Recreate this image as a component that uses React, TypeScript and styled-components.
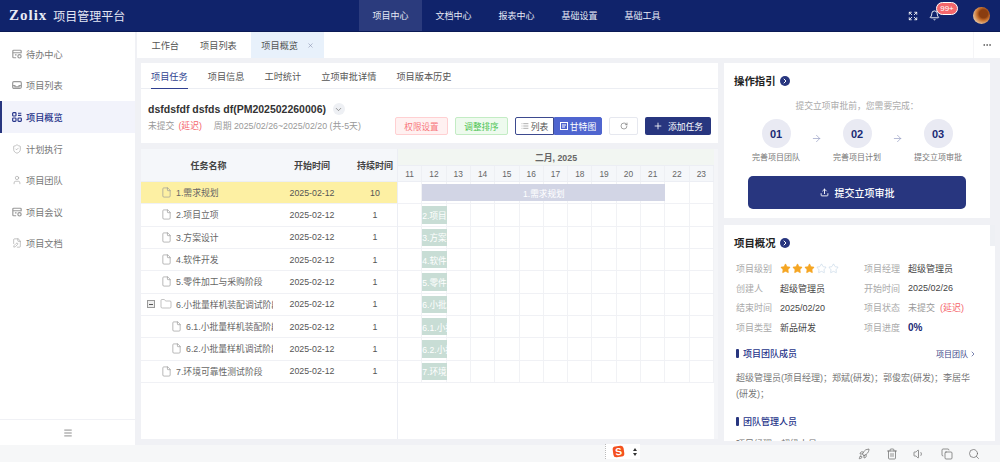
import React from 'react';
import styled, { createGlobalStyle } from 'styled-components';
import {
  ArrowRight,
  Bell,
  ChevronDown,
  ChevronRight,
  Copy,
  Expand,
  File,
  Folder,
  List,
  Menu,
  MoreHorizontal,
  Plus,
  RotateCw,
  Rocket,
  Search,
  ShieldCheck,
  Star,
  Trash2,
  Upload,
  User,
  Volume1,
  X,
  FilePen,
} from 'lucide-react';

const NAVY = '#10236b';
const BTN_NAVY = '#28367f';

const GlobalStyle = createGlobalStyle`
  html, body { margin: 0; padding: 0; }
  body {
    font-family: "Liberation Sans", "Noto Sans CJK SC", sans-serif;
    font-size: 9px;
    color: #555;
  }
  * { box-sizing: border-box; }
`;

const Page = styled.div`
  width: 1000px;
  height: 462px;
  display: flex;
  flex-direction: column;
  overflow: hidden;
  background: #f0f1f5;
`;

/* top bar */
const Header = styled.header`
  height: 32px;
  flex: none;
  display: flex;
  align-items: stretch;
  background: ${NAVY};
  border-bottom: 1px solid #0b1a55;
  color: #fff;
`;
const Brand = styled.div`
  width: 359px;
  flex: none;
  display: flex;
  align-items: center;
  padding-left: 9px;
  gap: 6px;
`;
const LogoWord = styled.span`
  font-family: "Liberation Serif", serif;
  font-weight: 700;
  font-size: 15px;
  letter-spacing: 1px;
  color: #e8ebf6;
`;
const BrandTitle = styled.span`
  font-size: 12px;
  color: #e4e7f4;
`;
const NavItem = styled.div<{ $active?: boolean }>`
  width: 63px;
  display: flex;
  align-items: center;
  justify-content: center;
  font-size: 9px;
  color: #e6e9f5;
  background: ${(p) => (p.$active ? '#2b3b7d' : 'transparent')};
`;
const HeaderTools = styled.div`
  margin-left: auto;
  display: flex;
  align-items: center;
  padding-right: 10px;
`;
const BellWrap = styled.div`
  position: relative;
  display: flex;
  margin-left: 11px;
  margin-right: 33px;
`;
const Badge = styled.span`
  position: absolute;
  left: 7px;
  top: -8px;
  width: 22px;
  height: 13px;
  border-radius: 7px;
  border: 1px solid #fff;
  background: #f4676c;
  color: #fff;
  font-size: 8px;
  line-height: 11px;
  text-align: center;
`;
const Avatar = styled.div`
  width: 17px;
  height: 17px;
  border-radius: 50%;
  background: radial-gradient(circle at 62% 40%, #8a3d10 0 28%, #c8702c 45%, #ecd3b4 80%);
`;

/* shell */
const Body = styled.div`
  flex: 1;
  min-height: 0;
  display: flex;
`;
const Sidebar = styled.aside`
  width: 135px;
  flex: none;
  display: flex;
  flex-direction: column;
  background: #fff;
  padding-top: 6px;
`;
const SideItem = styled.div<{ $active?: boolean }>`
  height: 31.6px;
  flex: none;
  display: flex;
  align-items: center;
  gap: 4px;
  font-size: 9.2px;
  color: ${(p) => (p.$active ? '#26348a' : '#777')};
  font-weight: ${(p) => (p.$active ? 500 : 400)};
  background: ${(p) => (p.$active ? '#f2f3fb' : 'transparent')};
  border-left: ${(p) => (p.$active ? `2px solid ${BTN_NAVY}` : 'none')};
  padding-left: ${(p) => (p.$active ? '10px' : '12px')};
  svg { color: ${(p) => (p.$active ? '#26348a' : '#999')}; }
`;
const SideFooter = styled.div`
  margin-top: auto;
  height: 26px;
  display: flex;
  align-items: center;
  justify-content: center;
  border-top: 1px solid #f0f1f5;
  color: #777;
`;
const Main = styled.main`
  flex: 1;
  min-width: 0;
  display: flex;
  flex-direction: column;
  padding-left: 2px;
`;
const TabBar = styled.div`
  height: 26px;
  flex: none;
  display: flex;
  background: #fff;
`;
const Tab = styled.div<{ $active?: boolean }>`
  display: flex;
  align-items: center;
  gap: 9px;
  padding: 0 ${(p) => (p.$active ? '10px' : '10.5px')};
  margin-left: ${(p) => (p.$active ? '4px' : '0')};
  font-size: 9.2px;
  color: #555;
  background: ${(p) => (p.$active ? '#e8f1fb' : 'transparent')};
  &:first-child { margin-left: 4px; }
  svg { color: #8a93b0; }
`;
const TabMore = styled.div`
  margin-left: auto;
  width: 27px;
  display: flex;
  align-items: center;
  justify-content: center;
  border-left: 1px solid #f5f5f7;
  color: #555;
`;
const Content = styled.div`
  flex: 1;
  min-height: 0;
  display: flex;
  gap: 6px;
  padding: 5px 5px 4px 4px;
`;
const LeftCol = styled.div`
  width: 577px;
  flex: none;
  display: flex;
  flex-direction: column;
`;
const RightCol = styled.div`
  flex: 1;
  min-width: 0;
  display: flex;
  flex-direction: column;
  gap: 7px;
`;

/* project header */
const SubTabs = styled.div`
  height: 26px;
  flex: none;
  display: flex;
  gap: 20px;
  padding-left: 10px;
  background: #fff;
  border-bottom: 1px solid #eceef3;
`;
const SubTab = styled.div<{ $active?: boolean }>`
  display: flex;
  align-items: center;
  font-size: 9.2px;
  color: ${(p) => (p.$active ? '#2f3f90' : '#555')};
  border-bottom: 1px solid ${(p) => (p.$active ? '#2f3f90' : 'transparent')};
  margin-bottom: -1px;
`;
const InfoCard = styled.div`
  height: 54px;
  flex: none;
  display: flex;
  align-items: flex-end;
  justify-content: space-between;
  padding: 0 7px 8px 7px;
  background: #fff;
`;
const InfoText = styled.div`
  display: flex;
  flex-direction: column;
  gap: 4px;
  padding-bottom: 3px;
`;
const TitleRow = styled.div`
  display: flex;
  align-items: center;
  gap: 7px;
  font-size: 10.5px;
  font-weight: 700;
  color: #333;
`;
const RoundChevron = styled.span`
  width: 12px;
  height: 12px;
  border-radius: 50%;
  background: #eef0f4;
  display: flex;
  align-items: center;
  justify-content: center;
  color: #777;
`;
const MetaRow = styled.div`
  display: flex;
  gap: 4px;
  color: #999;
  font-size: 8.8px;
`;
const Late = styled.span`
  color: #f5656b;
`;
const Period = styled.span`
  margin-left: 8px;
`;
const Actions = styled.div`
  display: flex;
  align-items: center;
  gap: 7px;
`;
const SoftButton = styled.div<{ $tone: 'red' | 'green' }>`
  width: 53px;
  height: 18px;
  display: flex;
  align-items: center;
  justify-content: center;
  border-radius: 2px;
  font-size: 8.6px;
  border: 1px solid ${(p) => (p.$tone === 'red' ? '#ffd0d2' : '#c3ecc4')};
  background: ${(p) => (p.$tone === 'red' ? '#fff1f1' : '#eefaee')};
  color: ${(p) => (p.$tone === 'red' ? '#f7777b' : '#4cc452')};
`;
const Toggle = styled.div`
  display: flex;
  height: 18px;
`;
const ToggleItem = styled.div<{ $on?: boolean }>`
  display: flex;
  align-items: center;
  justify-content: center;
  gap: 2px;
  width: ${(p) => (p.$on ? '48px' : '39px')};
  font-size: 8.8px;
  border-radius: ${(p) => (p.$on ? '0 2px 2px 0' : '2px 0 0 2px')};
  background: ${(p) => (p.$on ? '#4f65cf' : '#fff')};
  color: ${(p) => (p.$on ? '#fff' : '#555')};
  border: 1px solid ${(p) => (p.$on ? '#4f65cf' : '#3d4a8f')};
`;
const IconButton = styled.div`
  width: 29px;
  height: 18px;
  display: flex;
  align-items: center;
  justify-content: center;
  border: 1px solid #e6e8ef;
  border-radius: 2px;
  color: #777;
`;
const PrimaryButton = styled.div`
  width: 66px;
  height: 18px;
  display: flex;
  align-items: center;
  justify-content: center;
  gap: 5px;
  border-radius: 2px;
  background: ${BTN_NAVY};
  color: #fff;
  font-size: 8.8px;
`;

/* gantt */
const GanttCard = styled.section`
  flex: 1;
  min-height: 0;
  margin: 6px 0 2px;
  display: flex;
  padding-right: 4px;
  background: #f4f5f8;
`;
const TaskPane = styled.div`
  width: 257px;
  flex: none;
  background: #fff;
  border-right: 1px solid #eceef4;
`;
const TaskHead = styled.div`
  height: 33px;
  display: grid;
  grid-template-columns: 135px 72px 49px;
  align-items: center;
  background: #f5f7fa;
  font-size: 9px;
  font-weight: 700;
  color: #444;
  text-align: center;
  border-bottom: 1px solid #eceef4;
`;
const TaskRow = styled.div<{ $active?: boolean }>`
  height: 22.33px;
  display: grid;
  grid-template-columns: 135px 72px 49px;
  align-items: center;
  background: ${(p) => (p.$active ? '#fdf0a3' : '#fff')};
  border-bottom: 1px solid #f0f1f5;
  color: #555;
  font-size: 8.8px;
  text-align: center;
`;
const NameCell = styled.div<{ $level: number }>`
  display: flex;
  align-items: center;
  gap: 4px;
  overflow: hidden;
  white-space: nowrap;
  padding-left: ${(p) => p.$level}px;
  margin-right: 3px;
  color: #666;
  svg { flex: none; color: #999; }
`;
const Collapse = styled.span`
  width: 8px;
  height: 8px;
  flex: none;
  margin-right: 1px;
  border: 1px solid #999;
  background: #eee;
  display: flex;
  align-items: center;
  justify-content: center;
  &::before {
    content: '';
    width: 4px;
    height: 1px;
    background: #555;
  }
`;
const DurationCell = styled.div`
  padding-left: 5px;
`;
const TimelinePane = styled.div`
  flex: 1;
  min-width: 0;
  background: #fff;
`;
const MonthHead = styled.div`
  height: 17px;
  display: flex;
  align-items: center;
  justify-content: center;
  background: #f2f6f2;
  color: #666;
  font-size: 8.8px;
  font-weight: 700;
  border-bottom: 1px solid #eceef4;
`;
const DaysHead = styled.div`
  height: 16px;
  display: grid;
  grid-template-columns: repeat(13, 1fr);
  background: #f5f7fa;
  border-bottom: 1px solid #eceef4;
`;
const Day = styled.div`
  display: flex;
  align-items: center;
  justify-content: center;
  color: #666;
  font-size: 8.4px;
  border-right: 1px solid #eef0f4;
`;
const TimelineRow = styled.div`
  height: 22.33px;
  display: grid;
  grid-template-columns: repeat(13, 1fr);
  grid-template-rows: 100%;
  border-bottom: 1px solid #f0f1f5;
`;
const GridCell = styled.div<{ $col: number }>`
  grid-row: 1;
  grid-column: ${(p) => p.$col};
  border-right: 1px solid #f1f2f5;
`;
const Bar = styled.div<{ $long?: boolean }>`
  grid-row: 1;
  grid-column: ${(p) => (p.$long ? '2 / span 10' : '2 / span 1')};
  min-width: 0;
  margin: 2px 0;
  display: flex;
  align-items: center;
  justify-content: ${(p) => (p.$long ? 'center' : 'flex-start')};
  overflow: hidden;
  white-space: nowrap;
  background: ${(p) => (p.$long ? '#d2d5e5' : '#c8ddd5')};
  color: #fff;
  font-size: 8.6px;
`;

/* right side */
const GuideCard = styled.section`
  height: 155px;
  flex: none;
  width: 266px;
  background: #fff;
  padding: 10px 10px 0;
  display: flex;
  flex-direction: column;
`;
const SectionTitle = styled.h3`
  margin: 0;
  display: flex;
  align-items: center;
  gap: 4px;
  font-size: 10.4px;
  font-weight: 700;
  color: #222;
`;
const TitleDot = styled.span`
  width: 10px;
  height: 10px;
  border-radius: 50%;
  background: ${BTN_NAVY};
  color: #fff;
  display: flex;
  align-items: center;
  justify-content: center;
`;
const GuideHint = styled.p`
  margin: 11px 0 0;
  text-align: center;
  color: #aaa;
  font-size: 8.8px;
`;
const Steps = styled.div`
  margin-top: 7px;
  display: flex;
  justify-content: center;
`;
const Step = styled.div`
  width: 60px;
  display: flex;
  flex-direction: column;
  align-items: center;
  gap: 3px;
`;
const StepNum = styled.div`
  width: 29px;
  height: 29px;
  border-radius: 50%;
  background: #e9eaf3;
  display: flex;
  align-items: center;
  justify-content: center;
  font-size: 11px;
  font-weight: 700;
  color: #1b2a75;
`;
const StepLabel = styled.span`
  font-size: 8px;
  color: #777;
  white-space: nowrap;
`;
const StepArrow = styled.div`
  width: 21px;
  height: 29px;
  padding-top: 14px;
  display: flex;
  justify-content: center;
  color: #8f96bf;
`;
const SubmitButton = styled.div`
  margin: 14px 14px 0;
  height: 33px;
  display: flex;
  align-items: center;
  justify-content: center;
  gap: 6px;
  border-radius: 5px;
  background: ${BTN_NAVY};
  color: #fff;
  font-size: 10px;
  font-weight: 500;
`;
const OverviewCard = styled.section`
  position: relative;
  flex: 1;
  min-height: 0;
  overflow: hidden;
  background: #fff;
  padding: 10px 18px 0 10px;
`;
const ScrollThumb = styled.div`
  position: absolute;
  top: 0;
  right: 0;
  width: 5px;
  height: 21px;
  background: #eef0f4;
`;
const Facts = styled.div`
  margin-top: 9px;
  padding-left: 2px;
  display: grid;
  grid-template-columns: 128px 1fr;
  grid-auto-rows: 19.6px;
  align-items: center;
`;
const Fact = styled.div`
  display: flex;
  align-items: center;
  white-space: nowrap;
`;
const FactLabel = styled.span`
  width: 44px;
  flex: none;
  color: #aaa;
  font-size: 9px;
`;
const FactValue = styled.span<{ $strong?: boolean; $muted?: boolean }>`
  font-size: ${(p) => (p.$strong ? '10px' : '9px')};
  color: ${(p) => (p.$strong ? '#1b2a75' : p.$muted ? '#999' : '#444')};
  font-weight: ${(p) => (p.$strong ? 700 : 400)};
  display: inline-flex;
  gap: 5px;
`;
const Stars = styled.span`
  display: inline-flex;
  gap: 1px;
`;
const GroupHead = styled.div<{ $gap: number }>`
  margin-top: ${(p) => p.$gap}px;
  padding-left: 2px;
  display: flex;
  align-items: center;
  justify-content: space-between;
`;
const GroupTitle = styled.div`
  display: flex;
  align-items: center;
  font-size: 9px;
  font-weight: 500;
  color: #26348a;
  &::before {
    content: '';
    width: 3px;
    height: 9px;
    margin-right: 4px;
    border-radius: 1px;
    background: ${BTN_NAVY};
  }
`;
const GroupLink = styled.span`
  display: flex;
  align-items: center;
  gap: 1px;
  font-size: 8px;
  color: #3a4788;
`;
const Members = styled.p<{ $gap: number }>`
  margin: ${(p) => p.$gap}px 0 0;
  padding-left: 2px;
  font-size: 9px;
  line-height: 16px;
  color: #777;
`;

/* bottom strip */
const BottomBar = styled.footer`
  height: 17px;
  flex: none;
  display: flex;
  align-items: center;
  background: #f6f7f8;
  padding-left: 605px;
  color: #666;
`;
const ImeWidget = styled.div`
  width: 35px;
  height: 15px;
  margin-top: -4px;
  display: flex;
  align-items: center;
  gap: 9px;
  padding-left: 7px;
  background: #fff;
  border-left: 1px dotted #bbb;
`;
const SogouMark = styled.span`
  width: 11px;
  height: 11px;
  border-radius: 3px;
  background: #f4511e;
  color: #fff;
  transform: rotate(-8deg);
  display: flex;
  align-items: center;
  justify-content: center;
  font-family: "Liberation Sans", sans-serif;
  font-weight: 700;
  font-size: 10px;
`;
const ImeArrows = styled.span`
  display: flex;
  flex-direction: column;
  gap: 2px;
  &::before, &::after {
    content: '';
    width: 0;
    height: 0;
    border-left: 2.5px solid transparent;
    border-right: 2.5px solid transparent;
  }
  &::before { border-bottom: 3px solid #333; }
  &::after { border-top: 3px solid #333; }
`;
const TrayIcons = styled.div`
  margin-left: 218px;
  display: flex;
  gap: 15.5px;
`;

type GlyphProps = { size?: number; strokeWidth?: number };

// box with a small clock at its lower right corner (待办 / 会议)
function WindowGlyph({ size = 10, strokeWidth = 1.2 }: GlyphProps) {
  return (
    <svg width={size} height={size} viewBox="0 0 12 12" fill="none" stroke="currentColor" strokeWidth={strokeWidth}>
      <path d="M11 5V2.5a1 1 0 0 0-1-1H2a1 1 0 0 0-1 1v7a1 1 0 0 0 1 1h3" />
      <path d="M1 4.5h10M3.5 7h2" />
      <circle cx="9" cy="8.8" r="2" />
    </svg>
  );
}

function TrayGlyph({ size = 10, strokeWidth = 1.2 }: GlyphProps) {
  return (
    <svg width={size} height={size} viewBox="0 0 12 12" fill="none" stroke="currentColor" strokeWidth={strokeWidth}>
      <rect x="0.8" y="2" width="10.4" height="8" rx="1.5" />
      <path d="M0.8 6.8h2.7v1.4h5V6.8h2.7" />
    </svg>
  );
}

function OverviewGlyph({ size = 10, strokeWidth = 1.2 }: GlyphProps) {
  return (
    <svg width={size} height={size} viewBox="0 0 12 12" fill="none" stroke="currentColor" strokeWidth={strokeWidth}>
      <rect x="0.8" y="0.8" width="4" height="4" rx="1" />
      <rect x="0.8" y="7.2" width="4" height="4" rx="1" />
      <rect x="7.2" y="7.2" width="4" height="4" rx="1" />
      <path d="M7.2 1.5h4M7.2 4h4" />
    </svg>
  );
}

function GanttGlyph() {
  return (
    <svg width="8" height="8" viewBox="0 0 8 8" fill="none" stroke="currentColor" strokeWidth="1">
      <rect x="0.5" y="0.5" width="7" height="7" />
      <path d="M2 3h4M2 5h3" />
    </svg>
  );
}

const navItems = ['项目中心', '文档中心', '报表中心', '基础设置', '基础工具'];
const sideItems = [
  { label: '待办中心', Icon: WindowGlyph },
  { label: '项目列表', Icon: TrayGlyph },
  { label: '项目概览', Icon: OverviewGlyph, active: true },
  { label: '计划执行', Icon: ShieldCheck },
  { label: '项目团队', Icon: User },
  { label: '项目会议', Icon: WindowGlyph },
  { label: '项目文档', Icon: FilePen },
];
const days = [11, 12, 13, 14, 15, 16, 17, 18, 19, 20, 21, 22, 23];
const tasks = [
  { name: '1.需求规划', level: 20, dur: 10, long: true },
  { name: '2.项目立项', level: 20, dur: 1 },
  { name: '3.方案设计', level: 20, dur: 1 },
  { name: '4.软件开发', level: 20, dur: 1 },
  { name: '5.零件加工与采购阶段', level: 20, dur: 1 },
  { name: '6.小批量样机装配调试阶段', level: 6, dur: 1, folder: true },
  { name: '6.1.小批量样机装配阶段', level: 30, dur: 1 },
  { name: '6.2.小批量样机调试阶段', level: 30, dur: 1 },
  { name: '7.环境可靠性测试阶段', level: 20, dur: 1 },
];
const steps = [
  { num: '01', label: '完善项目团队' },
  { num: '02', label: '完善项目计划' },
  { num: '03', label: '提交立项审批' },
];

export default function App() {
  return (
    <Page>
      <GlobalStyle />
      <Header>
        <Brand>
          <LogoWord>Zolix</LogoWord>
          <BrandTitle>项目管理平台</BrandTitle>
        </Brand>
        {navItems.map((n, i) => (
          <NavItem key={n} $active={i === 0}>{n}</NavItem>
        ))}
        <HeaderTools>
          <Expand size={10} strokeWidth={2} />
          <BellWrap>
            <Bell size={11} />
            <Badge>99+</Badge>
          </BellWrap>
          <Avatar />
        </HeaderTools>
      </Header>

      <Body>
        <Sidebar>
          {sideItems.map(({ label, Icon, active }) => (
            <SideItem key={label} $active={active}>
              <Icon size={10} strokeWidth={1.4} />
              {label}
            </SideItem>
          ))}
          <SideFooter>
            <Menu size={10} />
          </SideFooter>
        </Sidebar>

        <Main>
          <TabBar>
            <Tab>工作台</Tab>
            <Tab>项目列表</Tab>
            <Tab $active>
              项目概览
              <X size={7} />
            </Tab>
            <TabMore>
              <MoreHorizontal size={10} />
            </TabMore>
          </TabBar>

          <Content>
            <LeftCol>
              <SubTabs>
                <SubTab $active>项目任务</SubTab>
                <SubTab>项目信息</SubTab>
                <SubTab>工时统计</SubTab>
                <SubTab>立项审批详情</SubTab>
                <SubTab>项目版本历史</SubTab>
              </SubTabs>
              <InfoCard>
                <InfoText>
                  <TitleRow>
                    dsfdsfdf dsfds df(PM202502260006)
                    <RoundChevron>
                      <ChevronDown size={9} />
                    </RoundChevron>
                  </TitleRow>
                  <MetaRow>
                    未提交
                    <Late>(延迟)</Late>
                    <Period>周期 2025/02/26~2025/02/20 (共-5天)</Period>
                  </MetaRow>
                </InfoText>
                <Actions>
                  <SoftButton $tone="red">权限设置</SoftButton>
                  <SoftButton $tone="green">调整排序</SoftButton>
                  <Toggle>
                    <ToggleItem>
                      <List size={8} color="#888" />
                      列表
                    </ToggleItem>
                    <ToggleItem $on>
                      <GanttGlyph />
                      甘特图
                    </ToggleItem>
                  </Toggle>
                  <IconButton>
                    <RotateCw size={8} />
                  </IconButton>
                  <PrimaryButton>
                    <Plus size={10} />
                    添加任务
                  </PrimaryButton>
                </Actions>
              </InfoCard>

              <GanttCard>
                <TaskPane>
                  <TaskHead>
                    <div>任务名称</div>
                    <div>开始时间</div>
                    <DurationCell>持续时间</DurationCell>
                  </TaskHead>
                  {tasks.map((t, i) => (
                    <TaskRow key={t.name} $active={i === 0}>
                      <NameCell $level={t.level}>
                        {t.folder && <Collapse />}
                        {t.folder ? <Folder size={12} strokeWidth={1.2} /> : <File size={11} strokeWidth={1.5} />}
                        {t.name}
                      </NameCell>
                      <div>2025-02-12</div>
                      <DurationCell>{t.dur}</DurationCell>
                    </TaskRow>
                  ))}
                </TaskPane>
                <TimelinePane>
                  <MonthHead>二月, 2025</MonthHead>
                  <DaysHead>
                    {days.map((d) => (
                      <Day key={d}>{d}</Day>
                    ))}
                  </DaysHead>
                  {tasks.map((t) => (
                    <TimelineRow key={t.name}>
                      {days.map((d, i) => (
                        <GridCell key={d} $col={i + 1} />
                      ))}
                      <Bar $long={t.long}>{t.name}</Bar>
                    </TimelineRow>
                  ))}
                </TimelinePane>
              </GanttCard>
            </LeftCol>

            <RightCol>
              <GuideCard>
                <SectionTitle>
                  操作指引
                  <TitleDot>
                    <ChevronRight size={8} strokeWidth={3} />
                  </TitleDot>
                </SectionTitle>
                <GuideHint>提交立项审批前，您需要完成：</GuideHint>
                <Steps>
                  {steps.map((s, i) => (
                    <React.Fragment key={s.num}>
                      {i > 0 && (
                        <StepArrow>
                          <ArrowRight size={11} strokeWidth={1.4} />
                        </StepArrow>
                      )}
                      <Step>
                        <StepNum>{s.num}</StepNum>
                        <StepLabel>{s.label}</StepLabel>
                      </Step>
                    </React.Fragment>
                  ))}
                </Steps>
                <SubmitButton>
                  <Upload size={9} strokeWidth={2.4} />
                  提交立项审批
                </SubmitButton>
              </GuideCard>

              <OverviewCard>
                <ScrollThumb />
                <SectionTitle>
                  项目概况
                  <TitleDot>
                    <ChevronRight size={8} strokeWidth={3} />
                  </TitleDot>
                </SectionTitle>
                <Facts>
                  <Fact>
                    <FactLabel>项目级别</FactLabel>
                    <Stars>
                      {[0, 1, 2, 3, 4].map((n) => (
                        <Star
                          key={n}
                          size={11}
                          strokeWidth={1.2}
                          color={n < 3 ? '#f5a623' : '#bcd0e2'}
                          fill={n < 3 ? '#f5a623' : 'none'}
                        />
                      ))}
                    </Stars>
                  </Fact>
                  <Fact><FactLabel>项目经理</FactLabel><FactValue>超级管理员</FactValue></Fact>
                  <Fact><FactLabel>创建人</FactLabel><FactValue>超级管理员</FactValue></Fact>
                  <Fact><FactLabel>开始时间</FactLabel><FactValue>2025/02/26</FactValue></Fact>
                  <Fact><FactLabel>结束时间</FactLabel><FactValue>2025/02/20</FactValue></Fact>
                  <Fact>
                    <FactLabel>项目状态</FactLabel>
                    <FactValue $muted>未提交 <Late>(延迟)</Late></FactValue>
                  </Fact>
                  <Fact><FactLabel>项目类型</FactLabel><FactValue>新品研发</FactValue></Fact>
                  <Fact><FactLabel>项目进度</FactLabel><FactValue $strong>0%</FactValue></Fact>
                </Facts>
                <GroupHead $gap={10}>
                  <GroupTitle>项目团队成员</GroupTitle>
                  <GroupLink>项目团队<ChevronRight size={8} /></GroupLink>
                </GroupHead>
                <Members $gap={10}>超级管理员(项目经理)；郑斌(研发)；郭俊宏(研发)；李居华(研发)；</Members>
                <GroupHead $gap={13}>
                  <GroupTitle>团队管理人员</GroupTitle>
                </GroupHead>
                <Members $gap={8}>项目经理：超级人员</Members>
              </OverviewCard>
            </RightCol>
          </Content>
        </Main>
      </Body>

      <BottomBar>
        <ImeWidget>
          <SogouMark>S</SogouMark>
          <ImeArrows />
        </ImeWidget>
        <TrayIcons>
          <Rocket size={12} strokeWidth={1.4} />
          <Trash2 size={12} strokeWidth={1.4} />
          <Volume1 size={12} strokeWidth={1.4} />
          <Copy size={12} strokeWidth={1.4} />
          <Search size={12} strokeWidth={1.4} />
        </TrayIcons>
      </BottomBar>
    </Page>
  );
}
